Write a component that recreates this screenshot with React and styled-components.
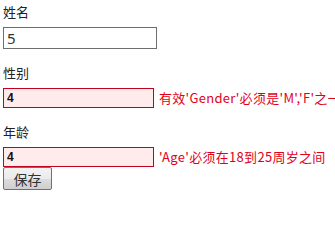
import React from "react";
import styled, { createGlobalStyle } from "styled-components";

const Global = createGlobalStyle`
  html, body { margin: 0; padding: 0; background: #fff; }
  body {
    font-family: "Noto Sans CJK SC", "Noto Sans", "Liberation Sans", sans-serif;
    font-size: 13px;
    color: #222;
  }
`;

const Form = styled.form`
  display: flex;
  flex-direction: column;
  align-items: flex-start;
  padding: 2px 0 0 3px;
  width: 332px;
  overflow: hidden;
`;

const Field = styled.div`
  display: flex;
  flex-direction: column;
  align-items: stretch;
  margin-bottom: ${(p) => (p.$last ? 0 : 14)}px;
  width: 100%;
`;

const Label = styled.label`
  display: block;
  height: 20px;
  line-height: 20px;
  font-size: 13px;
  margin-bottom: 5px;
  color: #222;
`;

const Row = styled.div`
  display: flex;
  align-items: center;
  white-space: nowrap;
`;

const Input = styled.input`
  box-sizing: border-box;
  width: ${(p) => (p.$error ? 151 : 154)}px;
  height: ${(p) => (p.$error ? 20 : 22)}px;
  margin: 0;
  padding: 0 0 0 3px;
  border: 1px solid ${(p) => (p.$error ? "#c4001f" : "#6f6f6f")};
  background: ${(p) => (p.$error ? "#ffebec" : "#fff")};
  font-family: ${(p) => (p.$error ? '"Liberation Sans", Arial, sans-serif' : '"Noto Sans", "Liberation Sans", sans-serif')};
  font-size: ${(p) => (p.$error ? "12px" : "15px")};
  font-weight: ${(p) => (p.$error ? 700 : 400)};
  color: ${(p) => (p.$error ? "#111" : "#333")};
  outline: none;
  flex: none;
`;

const Error = styled.span`
  margin-left: 5px;
  color: #e3001b;
  font-size: 13px;
  letter-spacing: 0.3px;
  line-height: 20px;
`;

const Button = styled.button`
  box-sizing: border-box;
  width: 49px;
  height: 23px;
  margin: 0;
  padding: 0;
  border: 1px solid #707070;
  border-radius: 2px;
  background: linear-gradient(#f2f2f2 0%, #ebebeb 50%, #dddddd 51%, #cfcfcf 100%);
  font-family: "Noto Sans CJK SC", sans-serif;
  font-size: 14px;
  color: #333;
`;

export default function App() {
  return (
    <>
      <Global />
      <Form onSubmit={(e) => e.preventDefault()}>
        <Field>
          <Label>姓名</Label>
          <Row>
            <Input defaultValue="5" />
          </Row>
        </Field>
        <Field>
          <Label>性别</Label>
          <Row>
            <Input $error defaultValue="4" />
            <Error>有效'Gender'必须是'M','F'之一</Error>
          </Row>
        </Field>
        <Field $last>
          <Label>年龄</Label>
          <Row>
            <Input $error defaultValue="4" />
            <Error>'Age'必须在18到25周岁之间</Error>
          </Row>
        </Field>
        <Button type="submit">保存</Button>
      </Form>
    </>
  );
}
